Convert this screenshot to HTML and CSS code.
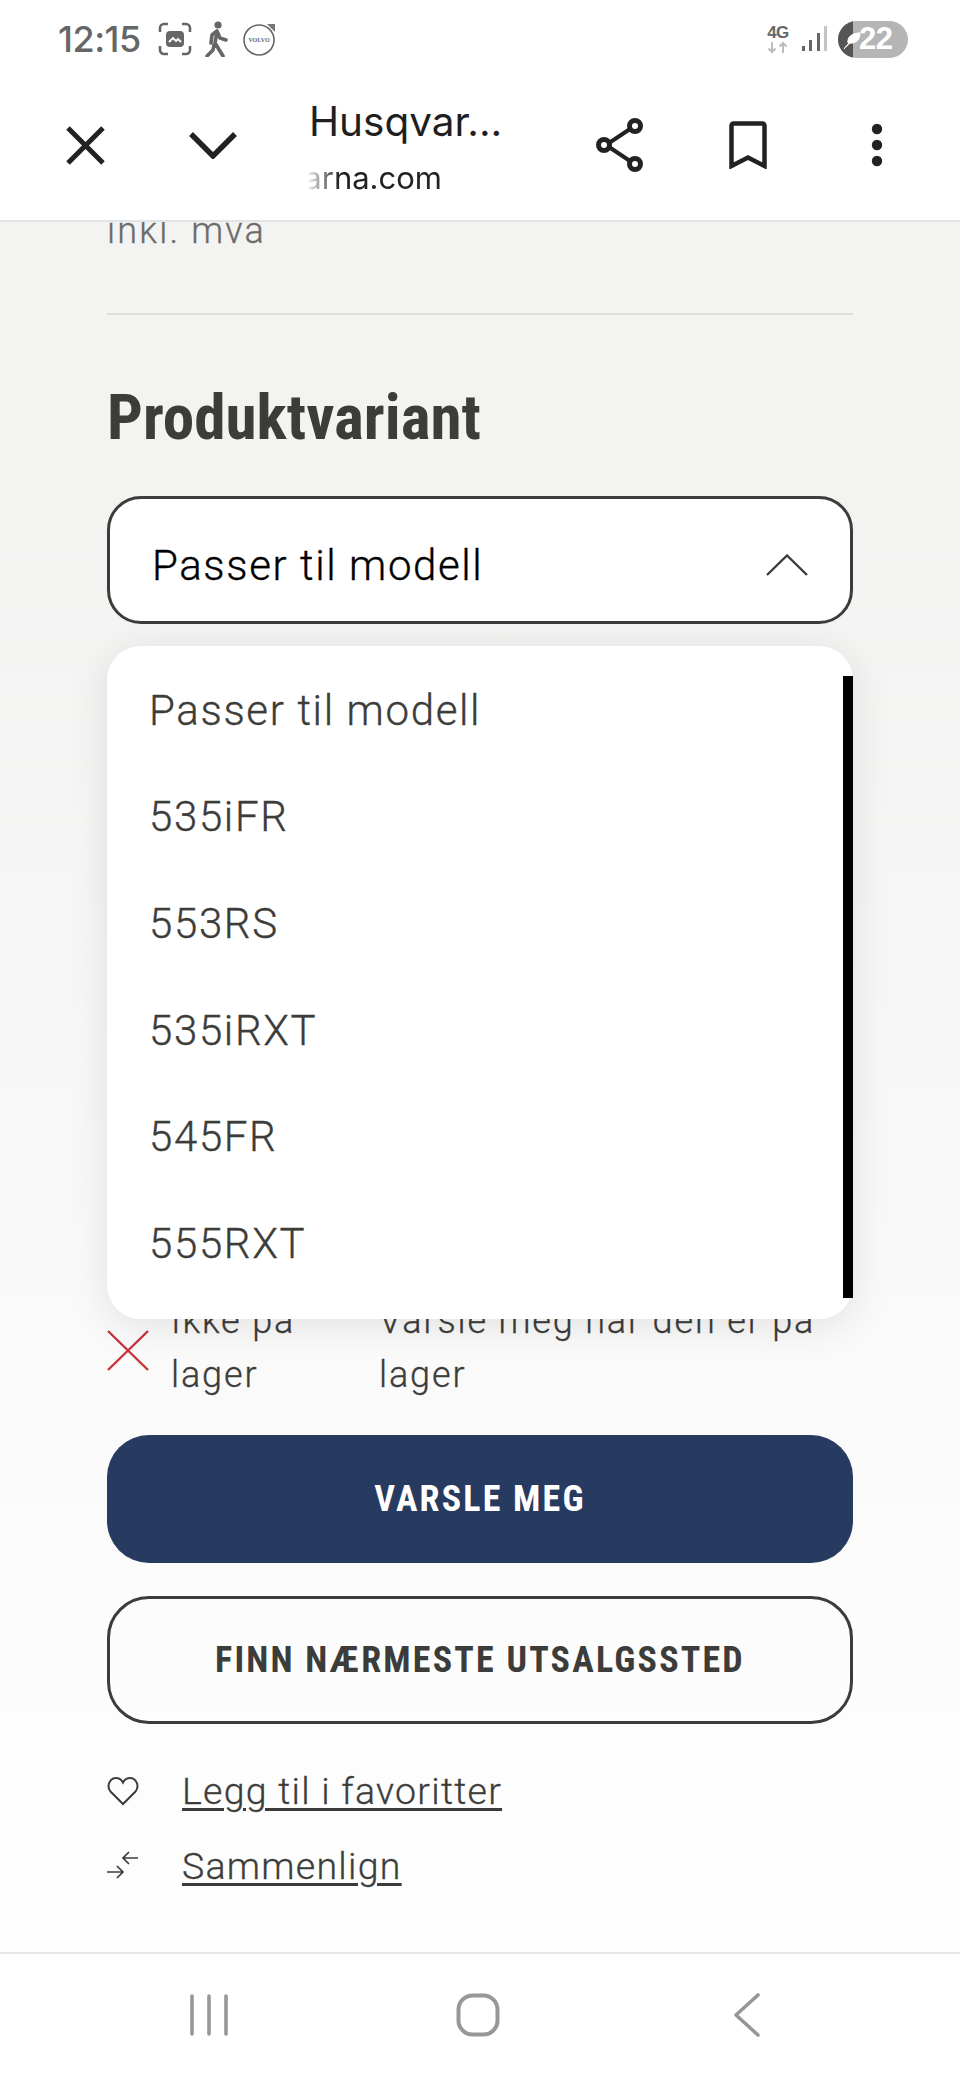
FILE: index.html
```html
<!DOCTYPE html>
<html lang="no">
<head>
<meta charset="utf-8">
<title>Husqvarna</title>
<link rel="stylesheet" href="styles.css">
</head>
<body>
<div class="phone">
  <div class="status">
    <div class="status-left">
      <span class="time">12:15</span>
      <svg class="st-shot" width="34" height="34" viewBox="0 0 34 34"><path d="M2 10V6a4 4 0 0 1 4-4h4M24 2h4a4 4 0 0 1 4 4v4M32 24v4a4 4 0 0 1-4 4h-4M10 32H6a4 4 0 0 1-4-4v-4" fill="none" stroke="#666" stroke-width="2.6"/><rect x="8" y="9" width="18" height="16" rx="4" fill="#666"/><path d="M11 20l4-4 3 3 2-2 3 3" fill="none" stroke="#fff" stroke-width="1.8"/></svg>
      <svg class="st-walk" width="26" height="36" viewBox="0 0 26 36"><circle cx="14" cy="4" r="3.6" fill="#666"/><path d="M13 10l-5 4-1 8M13 10l3 7 6 2M13 11l-2 11 8 13M10 24l-1 5-6 6" fill="none" stroke="#666" stroke-width="3.6" stroke-linecap="round" stroke-linejoin="round"/></svg>
      <svg class="st-volvo" width="34" height="34" viewBox="0 0 34 34"><circle cx="17" cy="18" r="15" fill="none" stroke="#666" stroke-width="1.6"/><path d="M25 2h8v8z" fill="#777"/><text x="17" y="20" class="volvo-t" text-anchor="middle">VOLVO</text></svg>
    </div>
    <div class="status-right">
      <div class="net"><span class="net-g">4G</span><svg width="22" height="13" viewBox="0 0 22 13"><path d="M5 1v10M1.500 7.500L5 11l3.500-3.500M16 12V2M12.500 5.500L16 2l3.500 3.500" fill="none" stroke="#bdbdbd" stroke-width="2"/></svg></div>
      <svg class="signal" width="26" height="28" viewBox="0 0 26 28"><rect x="0" y="21" width="3" height="5" fill="#666"/><rect x="7" y="15" width="3" height="11" fill="#666"/><rect x="15" y="8" width="3" height="18" fill="#666"/><rect x="22" y="1" width="3" height="25" fill="#c4c4c4"/></svg>
      <div class="battery"><span class="bat-fill"><svg width="18" height="20" viewBox="0 0 18 20"><path d="M1 19C4 14 8 12 12 9M5 13C4 7 9 3 17 3c0 7-4 11-12 10z" fill="#fff" stroke="#fff" stroke-width="1"/></svg></span><span class="bat-num">22</span></div>
    </div>
  </div>

  <header class="toolbar">
    <svg class="tb-close" width="40" height="40" viewBox="0 0 40 40"><path d="M3 3l35 35M38 3L3 38" fill="none" stroke="#222" stroke-width="5"/></svg>
    <svg class="tb-chev" width="48" height="28" viewBox="0 0 48 28"><path d="M2 3l22 22L46 3" fill="none" stroke="#222" stroke-width="5.500"/></svg>
    <div class="tb-title">
      <div class="tb-name">Husqvar...</div>
      <div class="tb-url"><span>husqvarna.com</span></div>
    </div>
    <svg class="tb-share" width="50" height="54" viewBox="0 0 50 54"><path d="M11 27L38 9M11 27l27 18" stroke="#222" stroke-width="4" fill="none"/><circle cx="40" cy="8" r="5.500" fill="#fff" stroke="#222" stroke-width="5"/><circle cx="9" cy="27" r="5.500" fill="#fff" stroke="#222" stroke-width="5"/><circle cx="40" cy="46" r="5.500" fill="#fff" stroke="#222" stroke-width="5"/></svg>
    <svg class="tb-mark" width="38" height="48" viewBox="0 0 38 48"><path d="M2.500 45V4.500a2 2 0 0 1 2-2h29a2 2 0 0 1 2 2V45L19 36.500z" fill="none" stroke="#222" stroke-width="4.500"/></svg>
    <svg class="tb-more" width="12" height="44" viewBox="0 0 12 44"><circle cx="6" cy="6" r="5.200" fill="#222"/><circle cx="6" cy="22" r="5.200" fill="#222"/><circle cx="6" cy="38" r="5.200" fill="#222"/></svg>
  </header>

  <main class="content">
    <p class="vat">inkl. mva</p>
    <hr class="rule">
    <h2 class="title">Produktvariant</h2>
    <div class="select-wrap">
      <div class="select">
        <span>Passer til modell</span>
        <svg width="42" height="22" viewBox="0 0 42 22"><path d="M1 21L21 1.500 41 21" fill="none" stroke="#3c3c3a" stroke-width="2.400"/></svg>
      </div>
      <ul class="menu">
        <li>Passer til modell</li>
        <li>535iFR</li>
        <li>553RS</li>
        <li>535iRXT</li>
        <li>545FR</li>
        <li>555RXT</li>
      </ul>
    </div>
    <div class="stock">
      <svg class="stock-x" width="44" height="44" viewBox="0 0 44 44"><path d="M1 2l40 39M41 2L1 41" fill="none" stroke="#c8323a" stroke-width="2.400"/></svg>
      <p class="stock-a">Ikke på lager</p>
      <p class="stock-b">Varsle meg når den er på lager</p>
    </div>
    <button class="btn btn-primary">VARSLE MEG</button>
    <button class="btn btn-outline">FINN NÆRMESTE UTSALGSSTED</button>
    <div class="links">
      <a class="link">
        <svg width="32" height="30" viewBox="0 0 32 30"><path d="M16 28L3.500 15.500C-1 10 3 2 9 2c3 0 5.500 1.500 7 4.500C17.500 3.500 20 2 23 2c6 0 10 8 5.500 13.500z" fill="none" stroke="#3c3c3a" stroke-width="2"/></svg>
        <span>Legg til i favoritter</span>
      </a>
      <a class="link">
        <svg width="32" height="30" viewBox="0 0 32 30"><path d="M31 7H16M22 1l-6 6 6 6M0 21h16M10 15l6 6-6 6" fill="none" stroke="#3c3c3a" stroke-width="1.700"/></svg>
        <span>Sammenlign</span>
      </a>
    </div>
  </main>

  <nav class="navbar">
    <svg width="42" height="42" viewBox="0 0 42 42"><path d="M4 2v38M21 2v38M38 2v38" stroke="#979797" stroke-width="3.600" stroke-linecap="round"/></svg>
    <svg class="nav-home" width="44" height="44" viewBox="0 0 44 44"><rect x="2.500" y="2.500" width="39" height="39" rx="14" fill="none" stroke="#979797" stroke-width="4"/></svg>
    <svg class="nav-back" width="28" height="44" viewBox="0 0 28 44"><path d="M25 2L3 22l22 20" fill="none" stroke="#979797" stroke-width="3.600" stroke-linecap="round" stroke-linejoin="round"/></svg>
  </nav>
</div>
</body>
</html>
```
FILE: styles.css
```css
* { box-sizing: border-box; }
html, body { margin: 0; padding: 0; background: #fff; }
body { font-family: Roboto, "Liberation Sans", sans-serif; color: #3c3c3a; }
.phone { width: 960px; height: 2080px; display: flex; flex-direction: column; overflow: hidden; }

.status { height: 70px; flex: none; background: #fff; display: flex; justify-content: space-between; align-items: center; padding: 8px 52px 0 58px; }
.status-left { display: flex; align-items: center; }
.time { font-family: Inter, Roboto, sans-serif; font-size: 36px; font-weight: 500; color: #666; letter-spacing: -0.5px; margin-right: 17px; }
.st-walk { margin: 0 12px 0 12px; }
.volvo-t { font-family: "Liberation Serif", serif; font-size: 6px; font-weight: 700; fill: #666; }
.status-right { display: flex; align-items: center; }
.net { display: flex; flex-direction: column; align-items: center; width: 24px; margin-right: 12px; }
.net-g { font-family: "Liberation Sans", sans-serif; font-size: 17px; font-weight: 700; line-height: 17px; color: #666; letter-spacing: -0.5px; }
.signal { margin-right: 10px; }
.battery { width: 70px; height: 37px; border-radius: 19px; background: #b5b5b5; display: flex; align-items: center; overflow: hidden; }
.bat-fill { width: 15px; height: 37px; background: #555; flex: none; position: relative; }
.bat-fill svg { position: absolute; left: 5px; top: 9px; }
.bat-num { font-family: "Liberation Sans", sans-serif; font-size: 31px; font-weight: 700; color: #fff; margin-left: 6px; letter-spacing: -0.5px; }

.toolbar { height: 152px; flex: none; background: #fff; border-bottom: 2px solid #e1e5ea; display: flex; align-items: center; position: relative; }
.tb-close { margin-left: 65px; flex: none; }
.tb-chev { margin-left: 84px; flex: none; }
.tb-title { margin-left: 72px; width: 190px; flex: none; }
.tb-name { font-family: Inter, sans-serif; font-size: 40.500px; line-height: 50px; color: #1f1f1f; white-space: nowrap; margin-top: 6px; }
.tb-url { width: 133px; height: 42px; overflow: hidden; display: flex; justify-content: flex-end; font-family: Inter, sans-serif; font-size: 31px; line-height: 42px; color: #222; white-space: nowrap; -webkit-mask-image: linear-gradient(90deg, rgba(0,0,0,.1), #000 30px); mask-image: linear-gradient(90deg, rgba(0,0,0,.1), #000 30px); margin-top: 10px; }
.tb-url span { flex: none; }
.tb-share { margin-left: 96px; flex: none; }
.tb-mark { margin-left: 84px; flex: none; }
.tb-more { margin-left: 104px; flex: none; }

.content { flex: 1; min-height: 0; overflow: hidden; padding: 0 107px; background: linear-gradient(#f3f3f2 0, #f3f3f2 300px, #fdfdfd 1500px); }
.vat { margin: -18px 0 0; font-size: 36px; line-height: 54px; font-weight: 300; -webkit-text-stroke: 0.3px currentColor; color: #6b6b69; letter-spacing: 2.200px; }
.rule { margin: 55px 0 0; border: 0; border-top: 2px solid #dfdfdd; }
.title { margin: 51px 0 0; font-family: Roboto, sans-serif; font-stretch: condensed; font-size: 63.200px; line-height: 102px; font-weight: 700; color: #3c3c3a; }
.select-wrap { position: relative; margin-top: 28px; }
.select { height: 128px; border: 3px solid #3c3c3a; border-radius: 34px; background: #fff; display: flex; align-items: center; justify-content: space-between; padding: 10px 42px 0 42px; font-size: 42px; font-weight: 300; -webkit-text-stroke: 0.35px currentColor; letter-spacing: 1.600px; color: #000; }
.menu { position: absolute; z-index: 2; left: 0; right: 0; top: 150px; height: 673px; margin: 0; padding: 11px 0 0 42px; list-style: none; background: #fff; border-radius: 34px; box-shadow: 0 6px 40px rgba(0,0,0,.10); font-size: 42px; font-weight: 300; -webkit-text-stroke: 0.35px currentColor; letter-spacing: 1.650px; color: #3c3c3a; }
.menu li { height: 106.600px; display: flex; align-items: center; }
.menu::after { content: ""; position: absolute; right: 0; top: 30px; bottom: 21px; width: 10px; background: #000; }
.stock { margin-top: 670px; height: 110px; display: grid; grid-template-columns: 64px 208px 1fr; align-items: start; font-size: 36px; font-weight: 300; -webkit-text-stroke: 0.3px currentColor; line-height: 54px; letter-spacing: 1.850px; color: #3c3c3a; }
.stock p { margin: 0; }
.stock-x { margin-top: 35px; }
.btn { display: block; width: 100%; height: 128px; border-radius: 42px; font-family: Roboto, sans-serif; font-stretch: condensed; font-size: 36px; font-weight: 700; letter-spacing: 2.200px; }
.btn-primary { margin-top: 31px; border: 0; background: #273a60; color: #fff; }
.btn-outline { margin-top: 33px; border: 3px solid #3c3c3a; background: transparent; color: #3c3c3a; }
.links { margin-top: 40px; display: flex; flex-direction: column; gap: 21px; }
.link { display: flex; align-items: center; height: 54px; font-size: 37.500px; font-weight: 300; -webkit-text-stroke: 0.3px currentColor; letter-spacing: 1.250px; color: #3c3c3a; text-decoration: underline; text-decoration-thickness: 3px; text-underline-offset: 4px; }
.link svg { width: 32px; margin-right: 43px; flex: none; }

.navbar { height: 128px; flex: none; background: #fff; border-top: 2px solid #e6e6e6; display: flex; align-items: center; padding: 0 0 4px 188px; }
.nav-home { margin-left: 226px; }
.nav-back { margin-left: 233px; }
```
